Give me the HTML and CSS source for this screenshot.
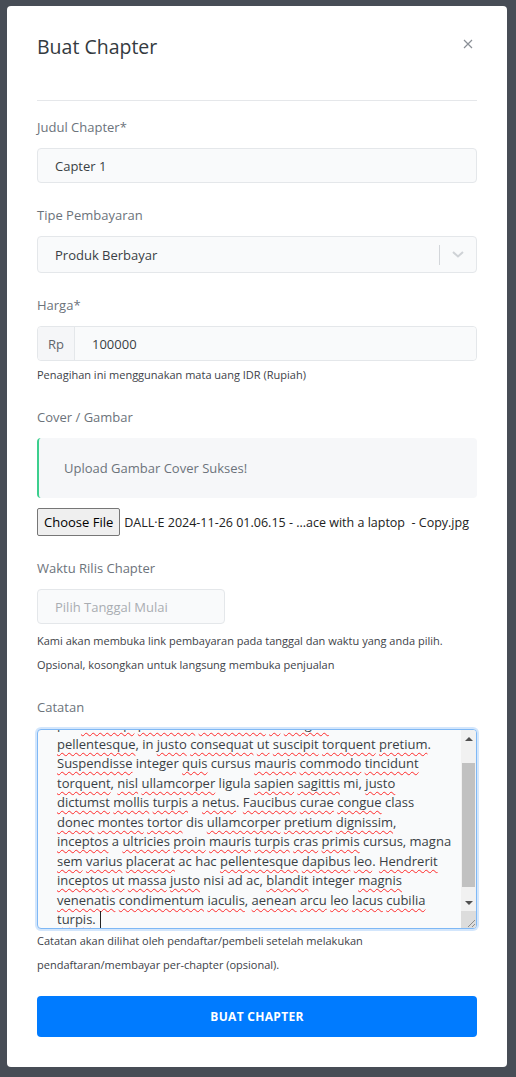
FILE: index.html
```html
<!DOCTYPE html>
<html lang="id">
<head>
  <meta charset="UTF-8">
  <meta name="viewport" content="width=device-width, initial-scale=1.0">
  <title>Buat Chapter</title>
  <link rel="stylesheet" href="styles.css">
</head>
<body>
  <div class="modal">
    <div class="modal-header">
      <h2>Buat Chapter</h2>
      <button class="close-btn" aria-label="Tutup">
        <svg width="10" height="10" viewBox="0 0 10 10"><path d="M1 1L9 9M9 1L1 9" stroke="#8a8f96" stroke-width="1.2" fill="none"/></svg>
      </button>
    </div>

    <form class="modal-body">
      <div class="form-group">
        <label>Judul Chapter*</label>
        <input class="form-control" type="text" value="Capter 1">
      </div>

      <div class="form-group">
        <label>Tipe Pembayaran</label>
        <div class="select">
          <span class="select-value">Produk Berbayar</span>
          <span class="select-sep"></span>
          <span class="select-arrow">
            <svg width="14" height="9" viewBox="0 0 14 9"><path d="M2 2L7 6.5L12 2" stroke="#cfd2d6" stroke-width="2" fill="none"/></svg>
          </span>
        </div>
      </div>

      <div class="form-group">
        <label>Harga*</label>
        <div class="input-group">
          <span class="addon">Rp</span>
          <input class="form-control" type="text" value="100000">
        </div>
        <p class="help help-tight">Penagihan ini menggunakan mata uang IDR (Rupiah)</p>
      </div>

      <div class="form-group">
        <label>Cover / Gambar</label>
        <div class="alert">Upload Gambar Cover Sukses!</div>
        <div class="file-row">
          <span class="file-btn">Choose File</span>
          <span class="file-name">DALL·E 2024-11-26 01.06.15 - ...ace with a laptop &nbsp;- Copy.jpg</span>
        </div>
      </div>

      <div class="form-group">
        <label>Waktu Rilis Chapter</label>
        <input class="form-control date-input" type="text" placeholder="Pilih Tanggal Mulai">
        <p class="help">Kami akan membuka link pembayaran pada tanggal dan waktu yang anda pilih.<br>Opsional, kosongkan untuk langsung membuka penjualan</p>
      </div>

      <div class="form-group last">
        <label class="notes-label">Catatan</label>
        <div class="notes-box">
          <div id="notes" class="notes" contenteditable="true" role="textbox" aria-multiline="true">per <span class="typo">sociosqu</span> <span class="typo">phasellus</span> <span class="typo">vestibulum</span> <span class="typo">in</span> <span class="typo">fringilla</span> class
<span class="typo">pellentesque</span>, in <span class="typo">justo</span> <span class="typo">consequat</span> <span class="typo">ut</span> <span class="typo">suscipit</span> <span class="typo">torquent</span> <span class="typo">pretium</span>.
<span class="typo">Suspendisse</span> integer <span class="typo">quis</span> cursus <span class="typo">mauris</span> <span class="typo">commodo</span> <span class="typo">tincidunt</span>
<span class="typo">torquent</span>, <span class="typo">nisl</span> <span class="typo">ullamcorper</span> ligula <span class="typo">sapien</span> <span class="typo">sagittis</span> mi, <span class="typo">justo</span>
<span class="typo">dictumst</span> <span class="typo">mollis</span> <span class="typo">turpis</span> a <span class="typo">netus</span>. <span class="typo">Faucibus</span> <span class="typo">curae</span> <span class="typo">congue</span> class
<span class="typo">donec</span> <span class="typo">montes</span> <span class="typo">tortor</span> dis <span class="typo">ullamcorper</span> <span class="typo">pretium</span> <span class="typo">dignissim</span>,
<span class="typo">inceptos</span> a <span class="typo">ultricies</span> <span class="typo">proin</span> <span class="typo">mauris</span> <span class="typo">turpis</span> <span class="typo">cras</span> <span class="typo">primis</span> cursus, magna
<span class="typo">sem</span> <span class="typo">varius</span> <span class="typo">placerat</span> ac hac <span class="typo">pellentesque</span> <span class="typo">dapibus</span> <span class="typo">leo</span>. <span class="typo">Hendrerit</span>
<span class="typo">inceptos</span> <span class="typo">ut</span> <span class="typo">massa</span> <span class="typo">justo</span> nisi ad ac, <span class="typo">blandit</span> integer <span class="typo">magnis</span>
<span class="typo">venenatis</span> <span class="typo">condimentum</span> <span class="typo">iaculis</span>, <span class="typo">aenean</span> <span class="typo">arcu</span> <span class="typo">leo</span> <span class="typo">lacus</span> <span class="typo">cubilia</span>
<span class="typo">turpis</span>. <span class="caret"></span></div>
          <div class="scrollbar">
            <span class="sb-btn sb-up"></span>
            <span class="sb-track"><span class="sb-thumb"></span></span>
            <span class="sb-btn sb-down"></span>
            <span class="sb-corner">
              <svg width="10" height="10" viewBox="0 0 10 10"><path d="M9 2L2 9M9 6L6 9" stroke="#8d8d8d" stroke-width="1" fill="none"/></svg>
            </span>
          </div>
        </div>
        <p class="help help-flush">Catatan akan dilihat oleh pendaftar/pembeli setelah melakukan<br>pendaftaran/membayar per-chapter (opsional).</p>
      </div>

      <button type="button" class="submit-btn">BUAT CHAPTER</button>
    </form>
  </div>

  <script src="script.js"></script>
</body>
</html>
```

FILE: styles.css
```css
* {
  margin: 0;
  padding: 0;
  box-sizing: border-box;
  font-family: 'Open Sans', 'Noto Sans', sans-serif;
}

body {
  background-color: #474d56;
  min-height: 100vh;
  padding: 6px 9px 10px 7px;
}

.modal {
  background-color: #fff;
  border-radius: 4px;
  width: 500px;
  padding: 0 30px 30px;
}

.modal-header {
  display: flex;
  justify-content: space-between;
  align-items: flex-start;
  padding: 28px 0 40px;
  border-bottom: 1px solid #e5e7ea;
}

.modal-header h2 {
  font-size: 19.5px;
  font-weight: 400;
  color: #343a40;
  line-height: 26px;
}

.close-btn {
  background: none;
  border: none;
  padding: 4px;
  margin-top: 1px;
  cursor: pointer;
  display: flex;
}

.modal-body {
  padding-top: 16px;
}

.form-group {
  margin-bottom: 22px;
}

.form-group.last {
  margin-bottom: 21px;
}

.form-group label {
  display: block;
  font-size: 13px;
  line-height: 20px;
  color: #6c737b;
  margin-bottom: 11px;
}

.form-group .notes-label {
  margin-bottom: 12px;
}

.form-control {
  display: block;
  width: 100%;
  height: 35px;
  padding: 0 17px;
  font-size: 13px;
  color: #3a3f45;
  background-color: #f9fafb;
  border: 1px solid #e4e7ea;
  border-radius: 4px;
  outline: none;
}

.form-control::placeholder {
  color: #a9adb2;
}

.date-input {
  width: 188px;
}

.select {
  display: flex;
  align-items: center;
  height: 37px;
  background-color: #f9fafb;
  border: 1px solid #e4e7ea;
  border-radius: 4px;
  padding-left: 17px;
}

.select-value {
  flex: 1;
  font-size: 13px;
  color: #3a3f45;
}

.select-sep {
  width: 1px;
  height: 20px;
  background-color: #d3d6da;
}

.select-arrow {
  display: flex;
  justify-content: center;
  width: 36px;
}

.input-group {
  display: flex;
  height: 35px;
  border: 1px solid #e4e7ea;
  border-radius: 4px;
}

.input-group .addon {
  flex-shrink: 0;
  display: flex;
  align-items: center;
  justify-content: center;
  width: 37px;
  font-size: 13px;
  color: #5f656c;
  background-color: #f5f6f8;
  border-right: 1px solid #e4e7ea;
  border-radius: 4px 0 0 4px;
}

.input-group .form-control {
  flex: 1;
  width: auto;
  height: 100%;
  border: none;
  border-radius: 0 4px 4px 0;
}

.help {
  font-size: 11px;
  line-height: 24px;
  color: #3d4248;
  margin-top: 5px;
  margin-bottom: -2px;
}

.help-tight {
  margin-top: 2px;
}

.help-flush {
  margin-top: 0;
}

.alert {
  height: 60px;
  display: flex;
  align-items: center;
  padding-left: 25px;
  font-size: 13px;
  color: #6c737b;
  background-color: #f6f7f9;
  border-left: 2px solid #3ccf8e;
  border-radius: 4px;
}

.file-row {
  display: flex;
  align-items: center;
  gap: 4px;
  margin-top: 10px;
}

.file-btn {
  display: inline-flex;
  align-items: center;
  height: 28px;
  padding: 0 6px;
  font-size: 13px;
  color: #000;
  white-space: nowrap;
  background-color: #efefef;
  border: 1px solid #767676;
  border-radius: 2px;
}

.file-name {
  font-size: 12.5px;
  color: #222;
  white-space: nowrap;
}

/* notes box: editable text with a classic scrollbar beside it */
.notes-box {
  display: flex;
  height: 200px;
  background-color: #f9fafb;
  border: 1px solid #7fb8f5;
  border-radius: 4px;
  box-shadow: 0 0 0 2px rgba(128, 184, 245, 0.35);
  overflow: hidden;
}

.notes {
  flex: 1;
  padding: 0 4px 0 19px;
  font-size: 13px;
  line-height: 19.5px;
  color: #3a3f45;
  white-space: pre;
  outline: none;
  overflow: hidden;
}

.typo {
  text-decoration: underline wavy #ff2a2a;
  text-decoration-thickness: 1px;
  text-underline-offset: 3px;
  text-decoration-skip-ink: none;
}

.caret {
  display: inline-block;
  width: 1px;
  height: 17px;
  margin-left: 1px;
  vertical-align: -4px;
  background-color: #222;
}

.scrollbar {
  display: flex;
  flex-direction: column;
  width: 15px;
  background-color: #f1f1f1;
}

.sb-btn {
  display: flex;
  align-items: center;
  justify-content: center;
  height: 17px;
}

.sb-btn::after {
  content: '';
  border-left: 4px solid transparent;
  border-right: 4px solid transparent;
}

.sb-up::after {
  border-bottom: 4px solid #505050;
}

.sb-down::after {
  border-top: 4px solid #505050;
}

.sb-track {
  flex: 1;
  display: flex;
  padding: 16px 1px 7px;
}

.sb-thumb {
  flex: 1;
  background-color: #c1c1c1;
}

.sb-corner {
  display: flex;
  align-items: flex-end;
  justify-content: flex-end;
  height: 17px;
  background-color: #dcdcdc;
}

.submit-btn {
  display: block;
  width: 100%;
  height: 41px;
  font-size: 12px;
  font-weight: 700;
  letter-spacing: 0.3px;
  color: #fff;
  background-color: #007bff;
  border: none;
  border-radius: 4px;
  cursor: pointer;
}
```

FILE: script.js
```js
// show the end of the notes, as right after typing
const notes = document.getElementById('notes');
notes.scrollTop = notes.scrollHeight - notes.clientHeight - 2;
```
